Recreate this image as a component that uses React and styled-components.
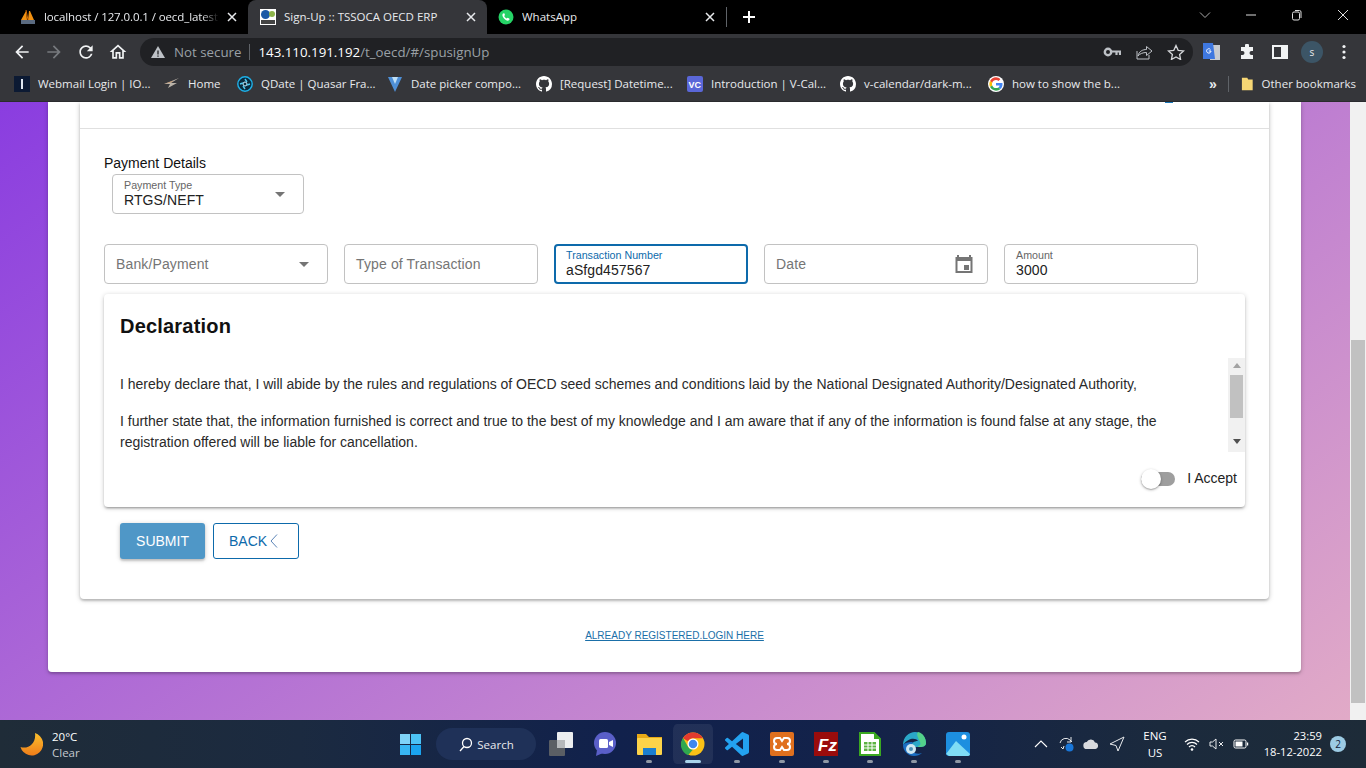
import React from "react";
import styled, { createGlobalStyle } from "styled-components";

const Global = createGlobalStyle`
  html, body { margin: 0; padding: 0; height: 100%; overflow: hidden; }
  * { box-sizing: border-box; }
  body { font-family: "Liberation Sans", Arial, sans-serif; }
`;

const uiFont = `"Open Sans", "Noto Sans", sans-serif`;

const Screen = styled.div`
  width: 1366px; height: 768px; display: flex; flex-direction: column; overflow: hidden;
`;

/* ---------- browser chrome ---------- */
const TabBar = styled.div`
  height: 34px; background: #000; display: flex; align-items: stretch; padding-left: 8px;
  font-family: ${uiFont}; font-size: 11.5px; color: #e8eaed; flex: none;
`;
const Tab = styled.div`
  width: 239px; display: flex; align-items: center; gap: 8px; padding-bottom: 1px;
  padding-left: ${p => p.$pl || 12}px; padding-right: ${p => p.$pr || 11}px;
  background: ${p => (p.$active ? "#35363a" : "transparent")};
  border-radius: 8px 8px 0 0;
  margin-left: ${p => (p.$active ? "1px" : "0")};
`;
const TabTitle = styled.span`
  flex: 1; white-space: nowrap; overflow: hidden;
  ${p => p.$fade && `letter-spacing: -.1px; -webkit-mask-image: linear-gradient(90deg,#000 90%,transparent); mask-image: linear-gradient(90deg,#000 90%,transparent);`}
`;
const TabDivider = styled.div`
  width: 1px; height: 20px; background: #5f6368; align-self: center;
`;
const NewTab = styled.div`
  width: 44px; display: flex; align-items: center; justify-content: center;
`;
const WindowControls = styled.div`
  margin-left: auto; display: flex; align-items: flex-start;
`;
const WindowButton = styled.div`
  width: 46px; height: 30px; display: flex; align-items: center; justify-content: center;
`;

const Toolbar = styled.div`
  height: 36px; background: #35363a; display: flex; align-items: center; padding-left: 6px;
  font-family: ${uiFont}; flex: none;
`;
const NavButton = styled.div`
  width: ${p => p.$w || 32}px; height: 28px; display: flex; align-items: center; justify-content: center; flex: none;
`;
const Omnibox = styled.div`
  width: 1053px; height: 28px; margin-left: 6px; border-radius: 14px; background: #202124;
  display: flex; align-items: center; padding: 0 8px 0 10px; flex: none;
`;
const NotSecure = styled.span`
  color: #9aa0a6; margin-left: 8px; font-size: 13.3px;
`;
const OmniDivider = styled.div`
  width: 1px; height: 16px; background: #5f6368; margin: 0 8px;
`;
const Url = styled.span`
  color: #9aa0a6; font-size: 13.3px;
  b { color: #fff; font-weight: 400; }
`;
const OmniActions = styled.div`
  margin-left: auto; display: flex; align-items: center; gap: 14px;
`;
const ToolActions = styled.div`
  display: flex; align-items: center; margin-left: 3px;
`;
const Avatar = styled.div`
  width: 22px; height: 22px; border-radius: 50%; background: #3c5566; color: #e8eaed;
  font-size: 10px; display: flex; align-items: center; justify-content: center;
`;

const BookmarkBar = styled.div`
  height: 32px; background: #35363a; display: flex; align-items: center; padding: 0 0 4px 14px;
  font-family: ${uiFont}; font-size: 11.5px; color: #e8eaed; flex: none;
  border-bottom: 1px solid #2a2b2e;
`;
const Bookmark = styled.div`
  width: ${p => p.$w}px; display: flex; align-items: center; gap: 8px; white-space: nowrap; flex: none;
`;
const BarDivider = styled.div`
  width: 1px; height: 16px; background: #5f6368; margin: 0 12px 0 4px;
`;
const Chevrons = styled.span`
  font-size: 14px; margin-left: 75px; width: 15px; font-weight: 600; font-family: "Liberation Sans", sans-serif;
`;

/* ---------- page ---------- */
const Viewport = styled.div`
  flex: 1; min-height: 0; display: flex;
  background: linear-gradient(145deg, #8a3de0 0%, #e2abc7 100%);
`;
const PageScroll = styled.div`
  flex: 1; min-width: 0; padding-left: 48px; overflow: hidden;
`;
const OuterCard = styled.div`
  width: 1253px; height: 570px; background: #fff; border-radius: 0 0 4px 4px; padding: 0 32px;
  box-shadow: 0 1px 5px rgba(0,0,0,.2), 0 2px 2px rgba(0,0,0,.14);
`;
const InnerCard = styled.div`
  height: 497px; background: #fff; border-radius: 0 0 4px 4px;
  box-shadow: 0 1px 5px rgba(0,0,0,.25), 0 2px 2px rgba(0,0,0,.14);
`;
const CardHeader = styled.div`
  height: 27px; border-bottom: 1px solid #e0e0e0; display: flex; justify-content: flex-end; padding-right: 96px;
`;
const HeaderPeek = styled.div`
  width: 8px; height: 1px; background: #1976b8;
`;
const CardBody = styled.div`
  padding: 24px 0 0 24px;
`;
const SectionLabel = styled.div`
  font-size: 14px; line-height: 20px; height: 21px; color: #111;
`;
const FieldBox = styled.div`
  position: relative; width: ${p => p.$w}px; height: 40px; flex: none;
  border: ${p => (p.$focus ? "2px solid #0d6aab" : "1px solid #c2c2c2")};
  border-radius: 4px; padding: 0 ${p => (p.$focus ? "10px" : "11px")};
  display: flex; align-items: center; justify-content: space-between; background: #fff;
`;
const PaymentBox = styled(FieldBox)`
  margin-left: 8px;
`;
const FieldStack = styled.div`
  display: flex; flex-direction: column; padding-bottom: 1px;
`;
const FieldCaption = styled.span`
  font-size: 10.7px; line-height: 12px; color: ${p => (p.$focus ? "#0d6aab" : "#666")};
`;
const FieldValue = styled.span`
  font-size: 14px; line-height: 17px; color: #222; margin-top: 1px; letter-spacing: .1px;
`;
const Placeholder = styled.span`
  font-size: 14px; color: #757575; letter-spacing: .13px;
`;
const Caret = styled.span`
  width: 0; height: 0; border-left: 5px solid transparent; border-right: 5px solid transparent;
  border-top: 5px solid #757575; margin-right: 7px; flex: none;
`;
const FieldRow = styled.div`
  display: flex; gap: 16px; margin-top: 30px;
`;
const DeclarationCard = styled.div`
  width: 1141px; height: 213px; margin-top: 10px; background: #fff; border-radius: 4px;
  box-shadow: 0 1px 5px rgba(0,0,0,.2), 0 2px 2px rgba(0,0,0,.14), 0 3px 1px -2px rgba(0,0,0,.12);
  display: flex; flex-direction: column;
`;
const DeclTitle = styled.h2`
  margin: 16px 0 16px 16px; font-size: 20px; line-height: 32px; font-weight: 700; color: #111; letter-spacing: .2px;
`;
const ScrollArea = styled.div`
  height: 94px; display: flex; overflow: hidden;
`;
const DeclText = styled.div`
  flex: 1; padding: 16px 60px 0 16px; font-size: 14px; line-height: 21px; color: #2a2a2a;
  p { margin: 0 0 16px; }
`;
const ScrollTrack = styled.div`
  width: 17px; background: #f1f1f1; display: flex; flex-direction: column; align-items: center; padding-top: 5px; flex: none;
`;
const ArrowUp = styled.span`
  width: 0; height: 0; border-left: 4px solid transparent; border-right: 4px solid transparent;
  border-bottom: 5px solid #a3a3a3;
`;
const ArrowDown = styled.span`
  width: 0; height: 0; border-left: 4px solid transparent; border-right: 4px solid transparent;
  border-top: 5px solid #505050; margin-top: 21px;
`;
const ScrollThumb = styled.div`
  width: 13px; height: 43px; background: #c1c1c1; margin-top: 7px;
`;
const AcceptRow = styled.div`
  flex: 1; display: flex; align-items: center; justify-content: flex-end; gap: 12px; padding: 0 8px 2px 0;
  font-size: 14px; color: #222;
`;
const AcceptLabel = styled.span`
  margin-bottom: 2px;
`;
const Switch = styled.div`
  position: relative; width: 34px; height: 14px; background: #9e9e9e; border-radius: 7px;
  &::after {
    content: ""; position: absolute; left: 0; top: -3px; width: 20px; height: 20px; border-radius: 50%;
    background: #fff; box-shadow: 0 1px 3px rgba(0,0,0,.3), 0 1px 1px rgba(0,0,0,.14);
  }
`;
const Actions = styled.div`
  display: flex; gap: 8px; margin: 16px 0 0 16px;
`;
const SubmitButton = styled.button`
  width: 85px; height: 36px; border: 0; border-radius: 3px; background: #4f97c7; color: #fff;
  font: 14px "Liberation Sans", Arial, sans-serif; box-shadow: 0 1px 5px rgba(0,0,0,.2), 0 2px 2px rgba(0,0,0,.14);
`;
const BackButton = styled.button`
  width: 86px; height: 36px; border: 1px solid #0d6aab; border-radius: 3px; background: #fff; color: #0d6aab;
  font: 14px "Liberation Sans", Arial, sans-serif; display: flex; align-items: center; justify-content: flex-start;
  padding: 0 0 0 15px; gap: 2px;
`;
const LoginLine = styled.div`
  margin-top: 29px; text-align: center; line-height: 11px;
`;
const LoginLink = styled.a`
  font-size: 10px; color: #1a6fa8; text-decoration: underline;
`;
const PageScrollbar = styled.div`
  width: 16px; flex: none; background: #f1f1f1; padding-top: 238px;
`;
const PageThumb = styled.div`
  height: 363px; background: #c1c1c1; margin: 0 1px;
`;

/* ---------- taskbar ---------- */
const Taskbar = styled.div`
  height: 48px; flex: none; display: flex; align-items: center; position: relative;
  background: linear-gradient(90deg, #1f2c38 0%, #1b2a40 22%, #11214c 45%, #13224a 62%, #1b2a3d 85%, #1d2b38 100%);
  font-family: ${uiFont}; color: #fff;
`;
const Weather = styled.div`
  width: 400px; padding-left: 20px; display: flex; align-items: center; gap: 9px; flex: none;
`;
const WeatherText = styled.div`
  font-size: 11.5px; line-height: 16px; padding-top: 1px;
  span { display: block; color: #c5c9cf; }
`;
const SearchPill = styled.div`
  width: 100px; height: 32px; border-radius: 16px; background: #1f3158; margin-left: 15px;
  display: flex; align-items: center; justify-content: center; gap: 4px; font-size: 11.5px; color: #e8eaed; flex: none;
`;
const AppSlot = styled.div`
  position: relative; width: 44.1px; height: 40px; flex: none; display: flex; align-items: center; justify-content: center;
  border-radius: 6px; padding: 0 2px; background-clip: content-box;
  ${p => p.$active && `background-color: rgba(255,255,255,.07);`}
  &::after {
    content: ""; display: ${p => (p.$dot ? "block" : "none")}; position: absolute; bottom: 1px; left: 50%;
    transform: translateX(-50%); height: 3px; border-radius: 2px;
    width: ${p => (p.$active ? "16px" : "6px")}; background: ${p => (p.$active ? "#a8d3ea" : "#8f98a5")};
  }
`;
const AppGroup = styled.div`
  display: flex; align-items: center; margin-left: 3px;
`;
const Tray = styled.div`
  margin-left: auto; display: flex; align-items: center; padding-right: 12px;
`;
const TraySlot = styled.div`
  width: ${p => p.$w}px; display: flex; align-items: center; justify-content: center; flex: none;
`;
const Lang = styled.div`
  font-size: 11.5px; line-height: 17px; text-align: center;
`;
const Clock = styled.div`
  width: 69px; font-size: 11.2px; line-height: 16px; text-align: right; white-space: nowrap;
`;
const Badge = styled.div`
  width: 16px; height: 16px; border-radius: 50%; background: #9ccbe4; color: #10203a; font-size: 10px;
  display: flex; align-items: center; justify-content: center;
`;

/* ---------- drawings ---------- */
const S = ({ w = 16, h, vb, children, ...r }) => (
  <svg width={w} height={h || w} viewBox={vb || `0 0 ${w} ${h || w}`} fill="none" {...r}>{children}</svg>
);
const Close = () => (
  <S w={10}><path d="M1 1l8 8M9 1L1 9" stroke="#e8eaed" strokeWidth="1.5" /></S>
);
const PmaIcon = () => (
  <S><path d="M1 11L6 2l1 9zM8 11l1-9 1 0 4 9z" fill="#f29111" /><path d="M6 1l2 10" stroke="#d66a00" /><rect x="1" y="11" width="14" height="4" fill="#5a6a80" /></S>
);
const OecdIcon = () => (
  <S><rect width="16" height="16" fill="#fff" /><circle cx="5.5" cy="5.5" r="4.5" fill="#1c5aa6" /><circle cx="12" cy="5" r="3" fill="#8db44a" /><rect x="1" y="11" width="14" height="4" fill="#444" /></S>
);
const WhatsIcon = () => (
  <S><circle cx="8" cy="8" r="7.5" fill="#25d366" /><path d="M5 4.5c-1 1-.8 2.700.8 4.800 1.500 1.800 3.400 2.800 4.700 2.300l1-.8-.2-1.300-1.800-.8-.9.8c-1-.4-2-1.500-2.400-2.500l.8-.9-.7-1.900z" fill="#fff" /></S>
);
const GitHub = () => (
  <S vb="0 0 16 16"><path fill="#fff" d="M8 0C3.580 0 0 3.580 0 8c0 3.540 2.290 6.530 5.470 7.590.4.070.55-.17.55-.38 0-.19-.01-.82-.01-1.490-2.010.37-2.530-.49-2.690-.94-.09-.23-.48-.94-.82-1.130-.28-.15-.68-.52-.01-.53.63-.01 1.080.58 1.230.82.72 1.210 1.870.87 2.330.66.070-.52.28-.87.51-1.070-1.780-.2-3.640-.89-3.640-3.950 0-.87.31-1.590.82-2.150-.08-.2-.36-1.020.08-2.120 0 0 .67-.21 2.200.82.64-.18 1.320-.27 2-.27s1.360.09 2 .27c1.530-1.040 2.200-.82 2.200-.82.44 1.100.16 1.920.08 2.120.51.56.82 1.270.82 2.150 0 3.070-1.870 3.750-3.650 3.950.29.25.54.73.54 1.480 0 1.070-.01 1.930-.01 2.200 0 .21.15.46.55.38A8.010 8.010 0 0016 8c0-4.420-3.580-8-8-8z" /></S>
);
const GoogleG = () => (
  <S vb="0 0 48 48">
    <circle cx="24" cy="24" r="24" fill="#fff" />
    <path fill="#EA4335" d="M24 12c3 0 5.500 1 7.500 2.900l5.500-5.500C33.500 6.200 29 4 24 4 16.200 4 9.500 8.500 6.200 15l6.500 5C14.300 15.300 18.700 12 24 12z" />
    <path fill="#4285F4" d="M43.500 24.500c0-1.300-.1-2.600-.4-3.800H24v7.600h11c-.5 2.500-1.900 4.600-4 6l6.300 4.900c3.700-3.400 6.200-8.500 6.200-14.700z" />
    <path fill="#FBBC05" d="M12.700 28.300c-.4-1.300-.7-2.800-.7-4.300s.3-3 .7-4.300l-6.500-5C4.800 17.500 4 20.700 4 24s.8 6.500 2.200 9.300z" />
    <path fill="#34A853" d="M24 44c5.400 0 9.900-1.800 13.300-4.800L31 34.300c-1.800 1.200-4.100 1.900-7 1.900-5.300 0-9.700-3.300-11.300-8l-6.500 5C9.500 39.500 16.200 44 24 44z" />
  </S>
);
const Chrome = () => (
  <S w={24} vb="0 0 48 48">
    <circle cx="24" cy="24" r="23" fill="#fbc116" />
    <path d="M24 1a23 23 0 0120 11.500H24a11.500 11.500 0 00-10 5.800L4 12.500A23 23 0 0124 1z" fill="#e33b2e" />
    <path d="M4 12.500l10 17.300a11.500 11.500 0 0010 5.700L14 47A23 23 0 014 12.500z" fill="#2fa84f" transform="translate(0 -.500)" />
    <circle cx="24" cy="24" r="11" fill="#fff" /><circle cx="24" cy="24" r="8.500" fill="#3f87f0" />
  </S>
);
const VsCode = () => (
  <S w={24}>
    <path fill="#23a2f0" d="M23.150 2.587L18.210.21a1.494 1.494 0 0 0-1.705.29l-9.460 8.630-4.120-3.128a.999.999 0 0 0-1.276.057L.327 7.261A1 1 0 0 0 .326 8.740L3.899 12 .326 15.260a1 1 0 0 0 .001 1.479L1.650 17.940a.999.999 0 0 0 1.276.057l4.120-3.128 9.460 8.630a1.492 1.492 0 0 0 1.704.29l4.942-2.377A1.500 1.500 0 0 0 24 20.060V3.939a1.500 1.500 0 0 0-.85-1.352zm-5.146 14.861L10.826 12l7.178-5.448v10.896z" />
  </S>
);

const App = () => (
  <Screen>
    <Global />
    <TabBar>
      <Tab $pr={10}><PmaIcon /><TabTitle $fade>localhost / 127.0.0.1 / oecd_latest</TabTitle><Close /></Tab>
      <Tab $active><OecdIcon /><TabTitle>Sign-Up :: TSSOCA OECD ERP</TabTitle><Close /></Tab>
      <Tab $pl={11}><WhatsIcon /><TabTitle>WhatsApp</TabTitle><Close /></Tab>
      <TabDivider />
      <NewTab><S w={14}><path d="M7 1v12M1 7h12" stroke="#fff" strokeWidth="2" /></S></NewTab>
      <WindowControls>
        <WindowButton><S w={12}><path d="M1 3.500l5 5 5-5" stroke="#aaa" /></S></WindowButton>
        <WindowButton><S w={12}><path d="M1 6h10" stroke="#ddd" /></S></WindowButton>
        <WindowButton><S w={12}><rect x="1.500" y="3" width="7" height="8" rx="1.500" stroke="#ddd" /><path d="M4 1.500h4.500A1.500 1.500 0 0110 3v6" stroke="#ddd" /></S></WindowButton>
        <WindowButton><S w={12}><path d="M1 1l10 10M11 1L1 11" stroke="#ddd" /></S></WindowButton>
      </WindowControls>
    </TabBar>

    <Toolbar>
      <NavButton><S w={20} vb="0 0 24 24"><path d="M20 11H7.830l5.590-5.590L12 4l-8 8 8 8 1.410-1.410L7.830 13H20v-2z" fill="#f1f3f4" /></S></NavButton>
      <NavButton><S w={20} vb="0 0 24 24"><path d="M12 4l-1.410 1.410L16.170 11H4v2h12.170l-5.580 5.590L12 20l8-8z" fill="#777a7e" /></S></NavButton>
      <NavButton><S w={20} vb="0 0 24 24"><path d="M17.650 6.350A7.958 7.958 0 0012 4c-4.420 0-7.990 3.580-7.990 8s3.570 8 7.990 8c3.730 0 6.840-2.550 7.730-6h-2.080A5.990 5.990 0 0112 18c-3.310 0-6-2.690-6-6s2.690-6 6-6c1.660 0 3.140.690 4.220 1.780L13 11h7V4l-2.350 2.350z" fill="#f1f3f4" /></S></NavButton>
      <NavButton><S w={20} vb="0 0 24 24"><path d="M12 5.690l5 4.500V18h-2v-6H9v6H7v-7.810l5-4.500M12 3L2 12h3v8h6v-6h2v6h6v-8h3L12 3z" fill="#f1f3f4" /></S></NavButton>
      <Omnibox>
        <S><path d="M8 2l7 12H1z" fill="#bdc1c6" /><path d="M8 6.500v4M8 11.500v1.200" stroke="#202124" strokeWidth="1.300" /></S>
        <NotSecure>Not secure</NotSecure>
        <OmniDivider />
        <Url><b>143.110.191.192</b>/t_oecd/#/spusignUp</Url>
        <OmniActions>
          <S w={18} h={16}><circle cx="5" cy="8" r="3.200" stroke="#bdc1c6" strokeWidth="2.400" /><path d="M8 7.500h9v3.500M13.500 8v3" stroke="#bdc1c6" strokeWidth="2.200" /></S>
          <S w={18} h={16}><path d="M2 7v8h12v-4" stroke="#bdc1c6" /><path d="M3 12c1-5 5-6.500 8.500-6.500V2.500L17 7l-5.500 4.500V8.500C8 8.500 5 9.500 3 12z" stroke="#bdc1c6" /></S>
          <S w={18} h={16}><path d="M9 1.500l2.200 4.800 5.300.6-3.900 3.500 1 5.100L9 12.900l-4.600 2.600 1-5.100L1.500 6.900l5.300-.6z" stroke="#d5d7da" strokeWidth="1.300" /></S>
        </OmniActions>
      </Omnibox>
      <ToolActions>
        <NavButton><S w={18}><path d="M7 2h10v15H7z" fill="#c9ccd0" /><path d="M0 0h10l2 16H0z" fill="#3f78e0" /><path d="M8 8a2.200 2.200 0 11-.6-1.600M5.800 8H8" stroke="#fff" strokeWidth="1" /></S></NavButton>
        <NavButton $w={37}><S><path d="M6 1.500a2 2 0 014 0V3h4v4h-1.500a2 2 0 000 4H14v4H2v-4h1.500a2 2 0 000-4H2V3h4z" fill="#f1f3f4" /></S></NavButton>
        <NavButton $w={30}><S><rect x="1" y="2" width="14" height="12" stroke="#f1f3f4" strokeWidth="2" /><rect x="9" y="2" width="6" height="12" fill="#f1f3f4" /></S></NavButton>
        <NavButton $w={34}><Avatar>s</Avatar></NavButton>
        <NavButton $w={30}><S w={4} h={16}><circle cx="2" cy="2.500" r="1.600" fill="#f1f3f4" /><circle cx="2" cy="8" r="1.600" fill="#f1f3f4" /><circle cx="2" cy="13.500" r="1.600" fill="#f1f3f4" /></S></NavButton>
      </ToolActions>
    </Toolbar>

    <BookmarkBar>
      <Bookmark $w={149}><S><rect width="16" height="16" fill="#0c1a33" /><rect x="7" y="3" width="2" height="10" fill="#dfe6ef" /></S>Webmail Login | IO...</Bookmark>
      <Bookmark $w={74}><S w={17}><path d="M1 9L16 3 8 8l6 0-9 5 2-4z" fill="#b9b2a8" /><path d="M1 9l9-3-1 1z" fill="#d08a4a" /></S>Home</Bookmark>
      <Bookmark $w={150}><S><circle cx="8" cy="8" r="7.200" fill="#0a2a3d" stroke="#1eb0e8" strokeWidth="1.400" /><circle cx="8" cy="8" r="2" stroke="#cfefff" /><path d="M8 3l2 3M13 8l-3 1M8 13l-2-3M3 8l3-1" stroke="#4fc8f0" strokeWidth="1.400" /></S>QDate | Quasar Fra...</Bookmark>
      <Bookmark $w={149}><S><path d="M1 1h14L8 16z" fill="#4e8fd6" /><path d="M5 1h6L8 8z" fill="#bfe0f7" /></S>Date picker compo...</Bookmark>
      <Bookmark $w={151}><GitHub />[Request] Datetime...</Bookmark>
      <Bookmark $w={153}><S><rect width="16" height="16" rx="2" fill="#5a67d8" /><text x="1.500" y="12" fontSize="9" fontWeight="700" fill="#fff" fontFamily="Liberation Sans">VC</text></S>Introduction | V-Cal...</Bookmark>
      <Bookmark $w={148}><GitHub />v-calendar/dark-m...</Bookmark>
      <Bookmark $w={146}><GoogleG />how to show the b...</Bookmark>
      <Chevrons>»</Chevrons>
      <BarDivider />
      <Bookmark $w={115}><S w={14} h={16}><path d="M1 1h6l1 2h5v12H1z" fill="#f7d774" /></S>Other bookmarks</Bookmark>
    </BookmarkBar>

    <Viewport>
      <PageScroll>
        <OuterCard>
          <InnerCard>
            <CardHeader><HeaderPeek /></CardHeader>
            <CardBody>
              <SectionLabel>Payment Details</SectionLabel>
              <PaymentBox $w={192}>
                <FieldStack><FieldCaption>Payment Type</FieldCaption><FieldValue>RTGS/NEFT</FieldValue></FieldStack>
                <Caret />
              </PaymentBox>
              <FieldRow>
                <FieldBox $w={224}><Placeholder>Bank/Payment</Placeholder><Caret /></FieldBox>
                <FieldBox $w={194}><Placeholder>Type of Transaction</Placeholder></FieldBox>
                <FieldBox $w={194} $focus>
                  <FieldStack><FieldCaption $focus>Transaction Number</FieldCaption><FieldValue>aSfgd457567</FieldValue></FieldStack>
                </FieldBox>
                <FieldBox $w={224}>
                  <Placeholder>Date</Placeholder>
                  <S w={24}><path d="M5 3h2v2h10V3h2v2h1.500v16h-17V5H5z" fill="#757575" /><rect x="5.500" y="9" width="13" height="10" fill="#fff" /><rect x="12" y="13" width="5" height="5" fill="#757575" /></S>
                </FieldBox>
                <FieldBox $w={194}>
                  <FieldStack><FieldCaption>Amount</FieldCaption><FieldValue>3000</FieldValue></FieldStack>
                </FieldBox>
              </FieldRow>
              <DeclarationCard>
                <DeclTitle>Declaration</DeclTitle>
                <ScrollArea>
                  <DeclText>
                    <p>I hereby declare that, I will abide by the rules and regulations of OECD seed schemes and conditions laid by the National Designated Authority/Designated Authority,</p>
                    <p>I further state that, the information furnished is correct and true to the best of my knowledge and I am aware that if any of the information is found false at any stage, the registration offered will be liable for cancellation.</p>
                  </DeclText>
                  <ScrollTrack><ArrowUp /><ScrollThumb /><ArrowDown /></ScrollTrack>
                </ScrollArea>
                <AcceptRow><Switch /><AcceptLabel>I Accept</AcceptLabel></AcceptRow>
              </DeclarationCard>
              <Actions>
                <SubmitButton>SUBMIT</SubmitButton>
                <BackButton>BACK<S w={10} h={16}><path d="M8 1.500L2 8l6 6.500" stroke="#5d86b8" /></S></BackButton>
              </Actions>
            </CardBody>
          </InnerCard>
          <LoginLine><LoginLink>ALREADY REGISTERED.LOGIN HERE</LoginLink></LoginLine>
        </OuterCard>
      </PageScroll>
      <PageScrollbar><PageThumb /></PageScrollbar>
    </Viewport>

    <Taskbar>
      <Weather>
        <S w={23} h={24}>
          <defs><linearGradient id="moon" x1="0" y1="0" x2="0" y2="1"><stop offset="0" stopColor="#fbc02d" /><stop offset="1" stopColor="#ef7d1a" /></linearGradient></defs>
          <path d="M15 1a11.500 11.500 0 11-14.500 14c8 2.500 16-4 14.500-14z" fill="url(#moon)" />
        </S>
        <WeatherText>20°C<span>Clear</span></WeatherText>
      </Weather>
      <S w={21}><rect x="0" y="0" width="10" height="10" fill="#7fd3f8" /><rect x="11" y="0" width="10" height="10" fill="#4cc2f5" /><rect x="0" y="11" width="10" height="10" fill="#38b6f2" /><rect x="11" y="11" width="10" height="10" fill="#1aa3ee" /></S>
      <SearchPill><S w={15}><circle cx="9" cy="6" r="4.500" stroke="#fff" strokeWidth="1.300" /><path d="M6 9.500L2 14" stroke="#fff" strokeWidth="1.300" /></S>Search</SearchPill>
      <AppGroup>
        <AppSlot><S w={24}><rect x="0" y="8" width="16" height="16" rx="1" fill="#5a5e64" /><rect x="8" y="0" width="16" height="16" rx="1" fill="#eceef0" /><rect x="8" y="8" width="8" height="8" fill="#b5b8bb" /></S></AppSlot>
        <AppSlot><S w={24}><circle cx="12" cy="11" r="11" fill="#5a5fc8" /><path d="M4 18l-1 6 7-3z" fill="#5a5fc8" /><rect x="6" y="7" width="9" height="9" rx="1.500" fill="#fff" /><path d="M16 10l4-2v7l-4-2z" fill="#fff" /></S></AppSlot>
        <AppSlot $dot><S w={25} h={24}><path d="M0 2h9l3 3h13v4H0z" fill="#e8a916" /><rect x="0" y="6" width="25" height="17" rx="1" fill="#fcd34a" /><rect x="6" y="16" width="13" height="7" fill="#1c7fd0" /></S></AppSlot>
        <AppSlot $active $dot><Chrome /></AppSlot>
        <AppSlot $dot><VsCode /></AppSlot>
        <AppSlot $dot><S w={24}><rect width="24" height="24" rx="2" fill="#e0701e" /><path d="M7 6h3l2 3 2-3h3a3 3 0 010 6 3 3 0 010 6h-3l-2-3-2 3H7a3 3 0 010-6 3 3 0 010-6z" stroke="#fff" strokeWidth="2" /></S></AppSlot>
        <AppSlot $dot><S w={24}><rect width="24" height="24" fill="#9a0c0c" /><text x="4" y="19" fontSize="17" fontStyle="italic" fontWeight="700" fontFamily="Liberation Sans" fill="#fff">Fz</text></S></AppSlot>
        <AppSlot $dot><S w={22} h={24}><path d="M1 1h14l6 6v16H1z" fill="#fff" stroke="#3aa821" strokeWidth="2" /><path d="M15 0l7 7h-7z" fill="#3aa821" /><rect x="5" y="10" width="12" height="9" fill="#5cb342" /><path d="M5 13h12M5 16h12M9 10v9M13 10v9" stroke="#fff" /></S></AppSlot>
        <AppSlot $dot><S w={24}><path d="M1 13C1 5 7 0 13 0c6 0 11 5 11 11 0 3-3 4-6 4H9c0-4 3-6 7-6-2-3-9-4-15 4z" fill="#2aa7c8" /><path d="M16 0c5 1 8 6 8 11 0 3-3 4-6 4-1 0-2 0-2-1 3 0 3-3 1-6-1-3-3-6-1-8z" fill="#53d18a" /><path d="M1 13c0 6 5 11 11 11 3 0 6-1 8-3-6 2-11-1-11-6 0-2 1-4 2-5-5 0-9 1-10 3z" fill="#1a6fc4" /><circle cx="9" cy="17" r="5" fill="#cfe7f2" /><circle cx="9" cy="17" r="2" fill="#4a90b8" /></S></AppSlot>
        <AppSlot $dot><S w={24}><rect width="24" height="24" rx="3" fill="#1d8fe0" /><path d="M0 22l10-13 14 13v0a2 2 0 01-2 2H3z" fill="#7fdcf5" /><circle cx="18" cy="5" r="2.500" fill="#fff" /></S></AppSlot>
      </AppGroup>
      <Tray>
        <TraySlot $w={25}><S w={14} h={10}><path d="M1 8l6-6 6 6" stroke="#fff" strokeWidth="1.100" /></S></TraySlot>
        <TraySlot $w={25}><S><path d="M2 7a6 6 0 0110-3l2 2M13 1v5H9" stroke="#e8eaed" /><path d="M3 11l2 2 1-3" stroke="#e8eaed" /><circle cx="11.500" cy="11.500" r="4" fill="#1976d8" /></S></TraySlot>
        <TraySlot $w={25}><S h={12}><path d="M4 11a3.500 3.500 0 01-.3-7A4.500 4.500 0 0112 4.500 3.300 3.300 0 0112.500 11z" fill="#d8dade" /></S></TraySlot>
        <TraySlot $w={28}><S><path d="M15 1L1 8l6 1.500L9 15z" stroke="#e8eaed" /></S></TraySlot>
        <TraySlot $w={48}><Lang>ENG<br />US</Lang></TraySlot>
        <TraySlot $w={26}><S><path d="M1 6a10 10 0 0114 0M3 8.500a7 7 0 0110 0M5 11a4 4 0 016 0" stroke="#fff" strokeWidth="1.200" /><circle cx="8" cy="13.500" r="1.300" fill="#fff" /></S></TraySlot>
        <TraySlot $w={24}><S><path d="M1 6h2.500L7 3v10L3.500 10H1z" stroke="#e8eaed" /><path d="M10 6l4 4M14 6l-4 4" stroke="#e8eaed" /></S></TraySlot>
        <TraySlot $w={24}><S><rect x="1" y="4" width="12" height="8" rx="1.500" stroke="#fff" /><rect x="2.500" y="5.500" width="7" height="5" fill="#fff" /><rect x="14" y="6.500" width="1.200" height="3" fill="#fff" /></S></TraySlot>
        <Clock>23:59<br />18-12-2022</Clock>
        <TraySlot $w={32}><Badge>2</Badge></TraySlot>
      </Tray>
    </Taskbar>
  </Screen>
);

export default App;
